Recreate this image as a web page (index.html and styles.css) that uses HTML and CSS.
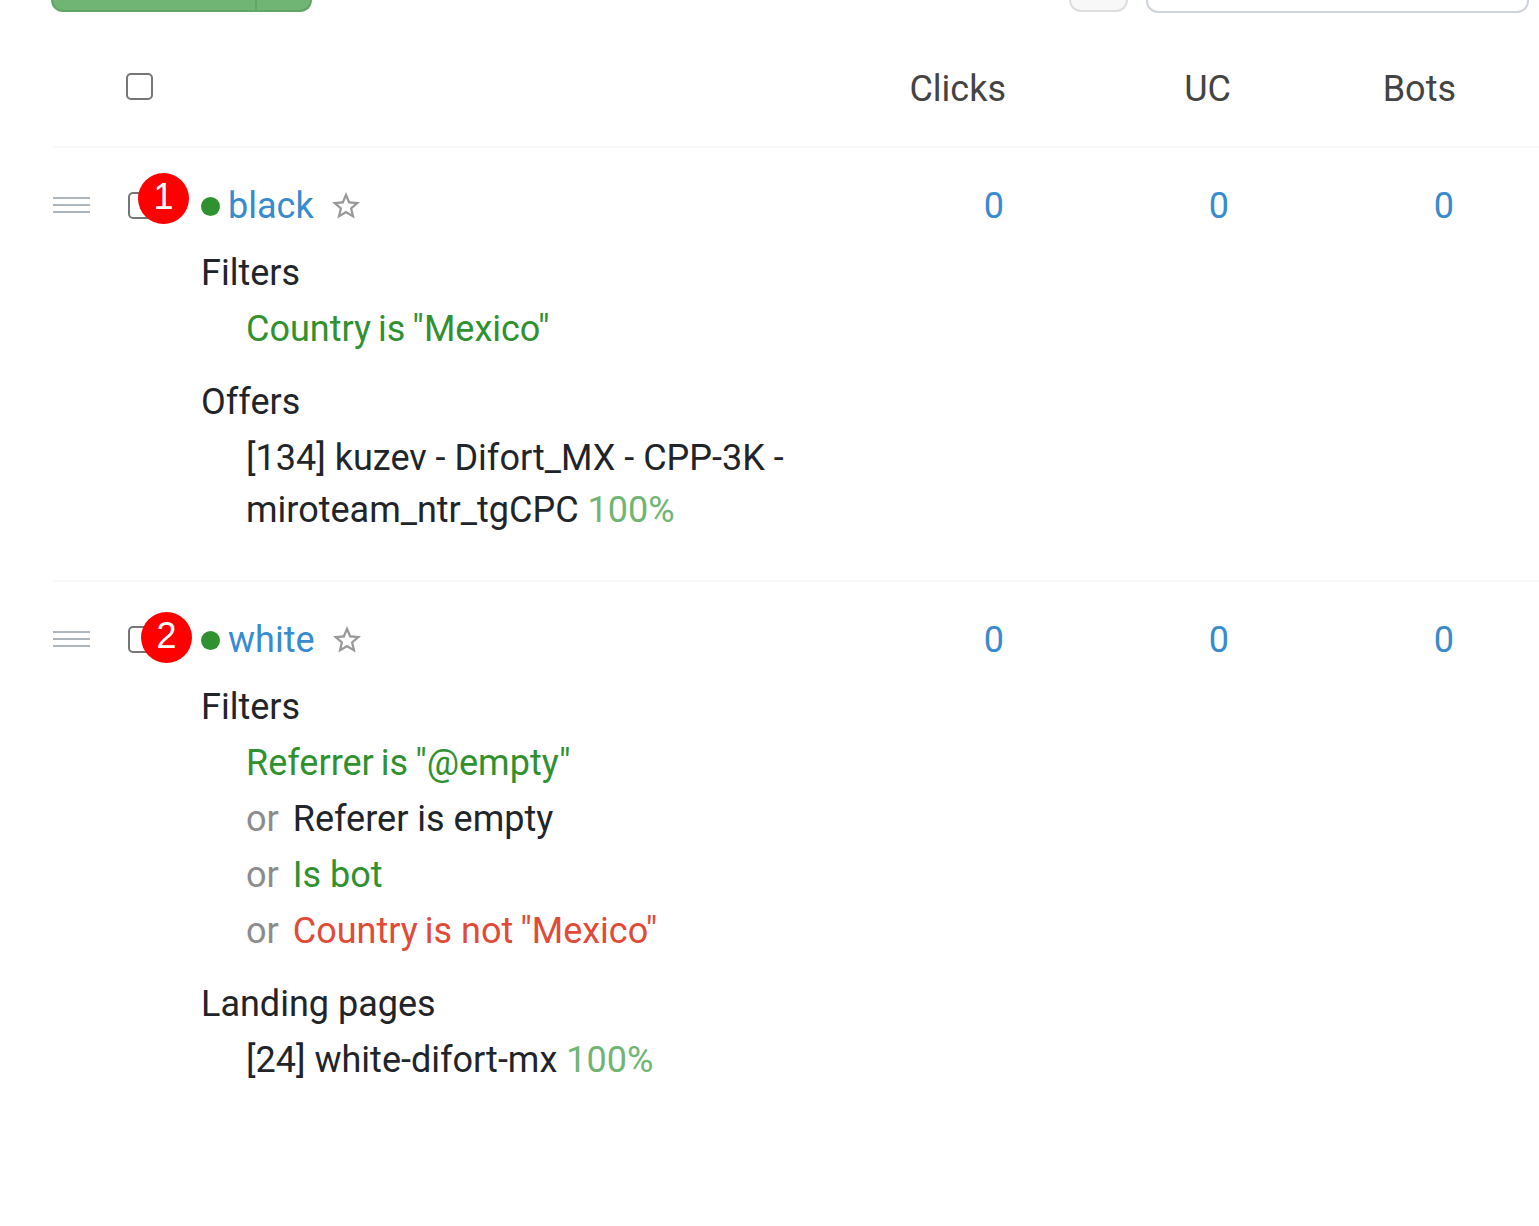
FILE: index.html
```html
<!DOCTYPE html>
<html lang="en">
<head>
  <meta charset="UTF-8" />
  <meta name="viewport" content="width=device-width, initial-scale=1" />
  <title>Streams</title>
  <link rel="stylesheet" href="styles.css">
</head>
<body>
  <div class="toolbar">
    <div class="btn-group">
      <button type="button" class="btn-create" aria-label="Create stream"></button>
      <button type="button" class="btn-toggle" aria-label="More options"></button>
    </div>
    <div class="toolbar-right">
      <button type="button" class="btn-refresh" aria-label="Refresh"></button>
      <input type="text" class="search" aria-label="Search" />
    </div>
  </div>

  <table class="streams">
    <colgroup>
      <col class="col-handle" />
      <col class="col-check" />
      <col />
      <col class="col-num" />
      <col class="col-num" />
      <col class="col-last" />
    </colgroup>
    <thead>
      <tr>
        <th></th>
        <th><input type="checkbox" class="check" aria-label="Select all" /></th>
        <th></th>
        <th class="num">Clicks</th>
        <th class="num">UC</th>
        <th class="num">Bots</th>
      </tr>
    </thead>
    <tbody>
      <tr>
        <td><span class="handle"></span></td>
        <td class="check-cell">
          <input type="checkbox" class="check" aria-label="Select black" />
          <span class="badge badge-first">1</span>
        </td>
        <td>
          <div class="name">
            <span class="dot"></span>
            <a href="#">black</a>
            <button type="button" class="star" aria-label="Favorite">
              <svg viewBox="2 2 20 20"><path d="M22 9.24l-7.19-.62L12 2 9.19 8.63 2 9.24l5.46 4.73L5.82 21 12 17.27 18.18 21l-1.63-7.03L22 9.24zM12 15.4l-3.76 2.27 1-4.28-3.32-2.88 4.38-.38L12 6.1l1.71 4.04 4.38.38-3.32 2.88 1 4.28L12 15.4z" /></svg>
            </button>
          </div>
          <div class="section">
            <div class="title">Filters</div>
            <div class="item filter green"><span>Country</span><span>is</span><span>"Mexico"</span></div>
          </div>
          <div class="section">
            <div class="title">Offers</div>
            <div class="item">[134] kuzev - Difort_MX - CPP-3K - miroteam_ntr_tgCPC <span class="share">100%</span></div>
          </div>
        </td>
        <td class="num"><a href="#">0</a></td>
        <td class="num"><a href="#">0</a></td>
        <td class="num"><a href="#">0</a></td>
      </tr>
      <tr>
        <td><span class="handle"></span></td>
        <td class="check-cell">
          <input type="checkbox" class="check" aria-label="Select white" />
          <span class="badge badge-second">2</span>
        </td>
        <td>
          <div class="name">
            <span class="dot"></span>
            <a href="#">white</a>
            <button type="button" class="star" aria-label="Favorite">
              <svg viewBox="2 2 20 20"><path d="M22 9.24l-7.19-.62L12 2 9.19 8.63 2 9.24l5.46 4.73L5.82 21 12 17.27 18.18 21l-1.63-7.03L22 9.24zM12 15.4l-3.76 2.27 1-4.28-3.32-2.88 4.38-.38L12 6.1l1.71 4.04 4.38.38-3.32 2.88 1 4.28L12 15.4z" /></svg>
            </button>
          </div>
          <div class="section">
            <div class="title">Filters</div>
            <div class="item filter green"><span>Referrer</span><span>is</span><span>"@empty"</span></div>
            <div class="item filter"><span class="or">or</span><span>Referer is empty</span></div>
            <div class="item filter green"><span class="or">or</span><span>Is bot</span></div>
            <div class="item filter red"><span class="or">or</span><span>Country</span><span>is not</span><span>"Mexico"</span></div>
          </div>
          <div class="section">
            <div class="title">Landing pages</div>
            <div class="item">[24] white-difort-mx <span class="share">100%</span></div>
          </div>
        </td>
        <td class="num"><a href="#">0</a></td>
        <td class="num"><a href="#">0</a></td>
        <td class="num"><a href="#">0</a></td>
      </tr>
    </tbody>
  </table>
</body>
</html>
```
FILE: styles.css
```css
* {
  box-sizing: border-box;
}

body {
  margin: 0;
  background: #fff;
  color: #212529;
  font-family: Roboto, sans-serif;
  font-size: 36px;
  line-height: 52px;
}

a {
  color: #388bcf;
  text-decoration: none;
}

button, input {
  margin: 0;
  padding: 0;
  font: inherit;
}

.toolbar {
  display: flex;
  justify-content: space-between;
  align-items: flex-start;
  padding: 0 10px 0 51px;
  margin-bottom: 18px;
}

.btn-group, .toolbar-right {
  display: flex;
}

.toolbar-right {
  gap: 18px;
}

.btn-create, .btn-toggle {
  height: 12px;
  background: #70b573;
  border: 2px solid #62a465;
  border-top: 0;
}

.btn-create {
  width: 206px;
  border-radius: 0 0 0 12px;
}

.btn-toggle {
  width: 55px;
  border-left: 0;
  border-radius: 0 0 12px 0;
}

.btn-refresh {
  width: 59px;
  height: 12px;
  background: #f8f8f8;
  border: 2px solid #dedede;
  border-top: 0;
  border-radius: 0 0 12px 12px;
}

.search {
  width: 383px;
  height: 13px;
  background: #fff;
  border: 2px solid #ced4da;
  border-top: 0;
  border-radius: 0 0 12px 12px;
}

.streams {
  width: calc(100% - 53px);
  margin-left: 53px;
  table-layout: fixed;
  border-collapse: separate;
  border-spacing: 0;
}

.col-handle {
  width: 73px;
}

.col-check {
  width: 75px;
}

.col-num {
  width: 225px;
}

.col-last {
  width: 289px;
}

th, td {
  padding: 32px 0 42px;
  text-align: left;
  vertical-align: top;
}

th {
  padding: 32px 0 31px;
  border-bottom: 2px solid #f7f7f7;
  color: #444;
  font-weight: 400;
}

tbody tr:first-child td {
  border-bottom: 2px solid #f7f7f7;
}

th.num {
  padding-right: 19px;
  text-align: right;
}

td.num {
  padding-right: 21px;
  text-align: right;
}

th.num:last-child {
  padding-right: 83px;
}

td.num:last-child {
  padding-right: 85px;
}

.check {
  appearance: none;
  display: block;
  width: 27px;
  height: 27px;
  margin-top: 10px;
  background: #fff;
  border: 2px solid #767676;
  border-radius: 5px;
}

.check-cell {
  position: relative;
  padding-left: 2px;
}

.check-cell .check {
  margin-top: 12px;
}

.badge {
  position: absolute;
  width: 51px;
  height: 51px;
  border-radius: 50%;
  background: #f00;
  color: #fff;
  font-family: "Liberation Sans", sans-serif;
  line-height: 48px;
  text-align: center;
}

.badge-first {
  top: 25px;
  left: 12px;
}

.badge-second {
  top: 30px;
  left: 15px;
}

.handle {
  display: block;
  width: 37px;
  height: 16px;
  margin-top: 17px;
  border-top: 2px solid #adb5bd;
  border-bottom: 2px solid #adb5bd;
  background: linear-gradient(#adb5bd, #adb5bd) center / 100% 2px no-repeat;
}

.name {
  display: flex;
  align-items: center;
  margin-bottom: 15px;
}

.dot {
  width: 19px;
  height: 19px;
  margin-right: 8px;
  border-radius: 50%;
  background: #2f912f;
}

.star {
  width: 28px;
  height: 28px;
  margin-left: 18px;
  background: none;
  border: 0;
}

.star svg {
  display: block;
  fill: #999;
}

.section + .section {
  margin-top: 19px;
}

.item {
  padding: 2px 0 2px 45px;
}

.title {
  padding-bottom: 2px;
}

.filter {
  display: flex;
  gap: 7px;
}

.or {
  margin-right: 7px;
  color: #8c8c8c;
}

.green {
  color: #2f912f;
}

.red {
  color: #e04a37;
}

.share {
  color: #70b573;
}
```
